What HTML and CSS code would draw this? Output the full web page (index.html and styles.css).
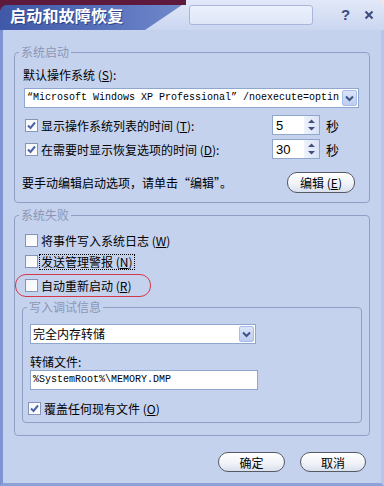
FILE: index.html
```html
<!DOCTYPE html>
<html lang="zh-CN">
<head>
<meta charset="utf-8">
<title>启动和故障恢复</title>
<link rel="stylesheet" href="styles.css">
</head>
<body>
<div class="window">
  <div class="titlebar">
    <div class="tab"><span class="title">启动和故障恢复</span></div>
    <div class="tbox"></div>
    <span class="help">?</span>
    <span class="close"><svg width="10" height="10" viewBox="0 0 10 10"><path d="M1.5 1.5 L8.5 8.5 M8.5 1.5 L1.5 8.5" stroke="#3a4b7e" stroke-width="2" fill="none"/></svg></span>
  </div>
  <div class="main">
    <fieldset class="group g1">
      <legend>系统启动</legend>
      <div class="lbl">默认操作系统 (<u>S</u>):</div>
      <div class="select wide">
        <span class="val mono">“Microsoft Windows XP Professional” /noexecute=optin</span>
        <span class="arrow"><svg width="9" height="7" viewBox="0 0 9 7"><path d="M1 1.5 L4.5 5 L8 1.5" stroke="#3e5284" stroke-width="2" fill="none"/></svg></span>
      </div>
      <div class="srow first">
        <label class="chk"><span class="box"><svg width="11" height="11" viewBox="0 0 11 11"><path d="M2 5.5 L4.5 8 L9 2.5" stroke="#4d64a6" stroke-width="2" fill="none"/></svg></span>显示操作系统列表的时间 (<u>T</u>):</label>
        <div class="spin"><span class="num">5</span><span class="sb"><svg width="9" height="16" viewBox="0 0 9 16"><path d="M1 6 L4.5 2.5 L8 6 Z M1 10 L4.5 13.5 L8 10 Z" fill="#3e4f7c"/></svg></span></div>
        <span class="sec">秒</span>
      </div>
      <div class="srow">
        <label class="chk"><span class="box"><svg width="11" height="11" viewBox="0 0 11 11"><path d="M2 5.5 L4.5 8 L9 2.5" stroke="#4d64a6" stroke-width="2" fill="none"/></svg></span>在需要时显示恢复选项的时间 (<u>D</u>):</label>
        <div class="spin"><span class="num">30</span><span class="sb"><svg width="9" height="16" viewBox="0 0 9 16"><path d="M1 6 L4.5 2.5 L8 6 Z M1 10 L4.5 13.5 L8 10 Z" fill="#3e4f7c"/></svg></span></div>
        <span class="sec">秒</span>
      </div>
      <div class="erow">
        <span>要手动编辑启动选项，请单击“编辑”。</span>
        <button class="pill edit">编辑 (<u>E</u>)</button>
      </div>
    </fieldset>

    <fieldset class="group g2">
      <legend>系统失败</legend>
      <label class="crow"><span class="box"></span>将事件写入系统日志 (<u>W</u>)</label>
      <label class="crow"><span class="box"></span><span class="focus">发送管理警报 (<u>N</u>)</span></label>
      <label class="crow redbox"><span class="box"></span>自动重新启动 (<u>R</u>)</label>
      <fieldset class="group inner">
        <legend>写入调试信息</legend>
        <div class="select narrow">
          <span class="val">完全内存转储</span>
          <span class="arrow"><svg width="9" height="7" viewBox="0 0 9 7"><path d="M1 1.5 L4.5 5 L8 1.5" stroke="#3e5284" stroke-width="2" fill="none"/></svg></span>
        </div>
        <div class="dlabel">转储文件:</div>
        <div class="input mono">%SystemRoot%\MEMORY.DMP</div>
        <label class="crow over"><span class="box"><svg width="11" height="11" viewBox="0 0 11 11"><path d="M2 5.5 L4.5 8 L9 2.5" stroke="#4d64a6" stroke-width="2" fill="none"/></svg></span>覆盖任何现有文件 (<u>O</u>)</label>
      </fieldset>
    </fieldset>

    <div class="footer">
      <button class="pill ok">确定</button>
      <button class="pill cancel">取消</button>
    </div>
  </div>
</div>
</body>
</html>
```

FILE: styles.css
```css
* { box-sizing: border-box; }
html, body { margin: 0; padding: 0; }
body {
  width: 384px;
  height: 486px;
  overflow: hidden;
  background: linear-gradient(to right, #5d1a3d 186px, #ece6ee 186px);
  font-family: "Noto Sans CJK SC", "Liberation Sans", sans-serif;
  font-size: 12px;
  color: #000;
}
u { text-decoration: underline; text-underline-offset: 1px; }

.window {
  display: flex;
  flex-direction: column;
  height: 486px;
}

/* title bar */
.titlebar {
  height: 30px;
  flex: none;
  display: flex;
  align-items: flex-start;
  border-top-right-radius: 10px;
  background:
    linear-gradient(#5d1a3d, #5d1a3d) 0 0 / 186px 5px no-repeat,
    linear-gradient(#5d1a3d, #5d1a3d) 0 0 / 8px 11px no-repeat,
    linear-gradient(#e1e8f8, #cbd6f0);
}
.tab {
  flex: none;
  width: 182px;
  height: 25px;
  margin-top: 5px;
  border-top-left-radius: 7px;
  background: linear-gradient(to right, #3f58a7, #5a73bd 60%, #7089cb);
  clip-path: polygon(0 0, 182px 0, 145px 25px, 0 25px);
  padding-left: 10px;
}
.title {
  display: block;
  color: #fff;
  font-weight: 700;
  font-size: 16px;
  line-height: 20px;
  letter-spacing: 0.2px;
  text-shadow: 1px 1px 0 #2e4488;
}
.tbox {
  flex: none;
  width: 124px;
  height: 20px;
  margin: 5px 0 0 7px;
  background: linear-gradient(#eaf0fb, #dfe7f7);
  border: 1px solid #a7b6da;
  border-radius: 3px;
}
.help {
  margin: 6px 0 0 28px;
  font-family: "Liberation Sans", sans-serif;
  font-weight: 700;
  font-size: 15px;
  line-height: 18px;
  color: #3a4b7e;
}
.close {
  margin: 10px 0 0 14px;
  line-height: 0;
}

/* main area */
.main {
  flex: 1;
  display: flex;
  flex-direction: column;
  background: #c5d2ee;
  border-left: 3px solid #7f95d3;
  border-right: 3px solid #b6c5e9;
  border-bottom: 3px solid #8ca1d8;
}

.group {
  margin: 0 11px;
  padding: 7px 7px 9px;
  border: 1px solid #909fc4;
  border-radius: 4px;
  min-width: 0;
}
.group legend {
  padding: 0 2px;
  margin-left: -3px;
  color: #8b96b4;
  line-height: 16px;
  font-size: 12px;
}
.g1 { margin-top: 14px; }
.g2 { margin-top: 4px; padding-bottom: 12px; }

.lbl { line-height: 16px; padding-left: 1px; }

.select {
  display: flex;
  align-items: center;
  height: 20px;
  background: #fff;
  border: 1px solid #8fa6cd;
}
.select.wide { width: 335px; margin-top: 5px; margin-left: 2px; }
.select.narrow { width: 226px; }
.select .val {
  flex: 1;
  min-width: 0;
  padding-left: 2px;
  white-space: nowrap;
  overflow: hidden;
  line-height: 18px;
}
.mono {
  font-family: "Liberation Mono", monospace;
  font-size: 10px;
}
.arrow {
  flex: none;
  width: 15px;
  height: 16px;
  margin-right: 1px;
  display: flex;
  align-items: center;
  justify-content: center;
  background: linear-gradient(#dbe5f9, #bccdf1);
  border: 1px solid #aabde8;
  border-radius: 2px;
}

.box {
  flex: none;
  width: 13px;
  height: 13px;
  margin: 0 3px;
  border: 1px solid #8494ba;
  background: linear-gradient(135deg, #f4f5f8, #ffffff);
  display: flex;
  align-items: center;
  justify-content: center;
}

.srow {
  display: flex;
  align-items: center;
  height: 20px;
  margin-top: 4px;
}
.srow.first { margin-top: 7px; }
.chk {
  display: flex;
  align-items: center;
  width: 250px;
  white-space: nowrap;
}
.spin {
  width: 48px;
  height: 20px;
  display: flex;
  align-items: center;
  background: #fff;
  border: 1px solid #8fa6cd;
  font-family: "Liberation Sans", sans-serif;
  font-size: 13px;
}
.spin .num { flex: 1; padding-left: 3px; }
.spin .sb {
  width: 15px;
  height: 18px;
  display: flex;
  align-items: center;
  justify-content: center;
  background: linear-gradient(to right, #eef2fb, #d9e2f6);
}
.sec { margin-left: 6px; font-size: 13px; }

.erow {
  display: flex;
  align-items: center;
  justify-content: space-between;
  height: 21px;
  margin-top: 13px;
}

.pill {
  height: 20px;
  padding: 0;
  border: 1px solid #555a63;
  border-radius: 10px;
  background: linear-gradient(#ffffff, #f1f3f8 55%, #d9e0ee);
  font-family: "Noto Sans CJK SC", "Liberation Sans", sans-serif;
  font-size: 12px;
  line-height: 17px;
  color: #000;
}
.pill.edit { width: 68px; height: 21px; margin-right: 7px; }
.pill.ok { width: 67px; }
.pill.cancel { width: 66px; }

.crow {
  display: flex;
  align-items: center;
  height: 21px;
  white-space: nowrap;
}
.focus {
  outline: 1px dotted #000;
  outline-offset: 0;
  line-height: 14px;
  padding: 0 1px;
  margin-left: -1px;
}
.redbox {
  width: 136px;
  height: 23px;
  margin: 2px 0 0 -7px;
  padding-left: 6px;
  border: 1px solid #d23848;
  border-radius: 11px;
}

.inner {
  margin: 2px 0 0;
  padding: 9px 7px 4px;
}
.dlabel {
  margin-top: 11px;
  line-height: 14px;
  padding-left: 0;
}
.input {
  width: 228px;
  height: 20px;
  margin-top: 1px;
  padding-left: 2px;
  background: #fff;
  border: 1px solid #8fa6cd;
  line-height: 18px;
}
.crow.over {
  height: 20px;
  margin-top: 8px;
  margin-left: -5px;
}

.footer {
  display: flex;
  justify-content: flex-end;
  gap: 15px;
  margin-top: 16px;
  padding-right: 15px;
}
```
